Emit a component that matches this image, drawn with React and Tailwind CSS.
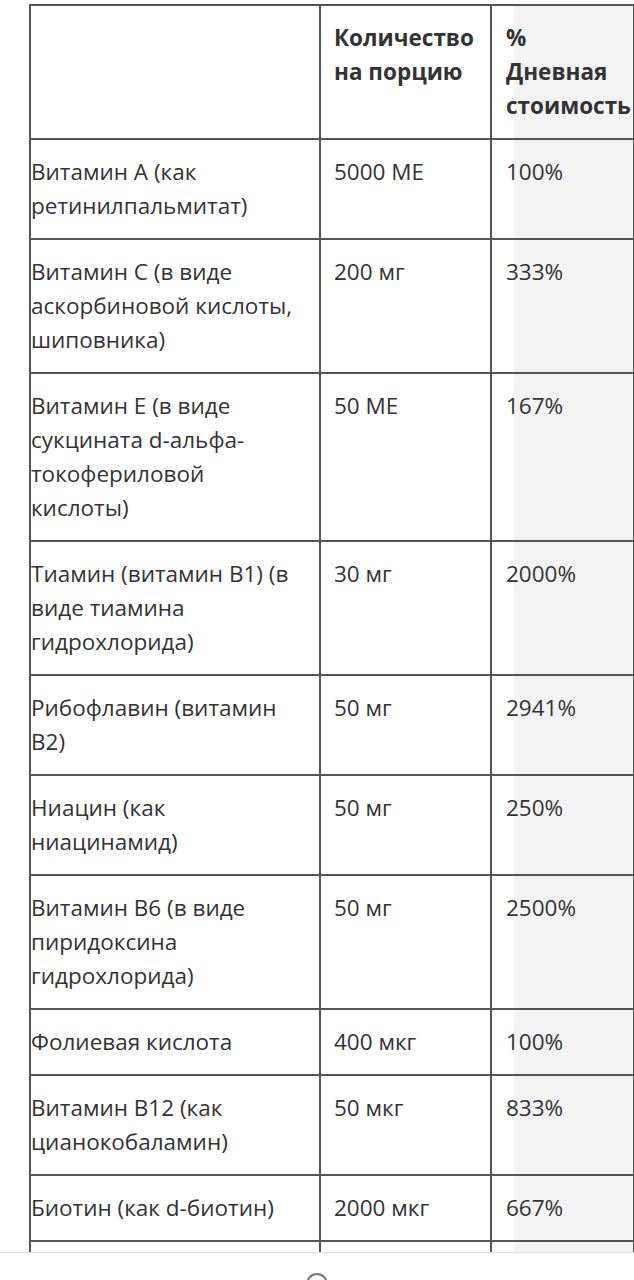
import React from "react";

const rows = [
  ["Витамин A (как ретинилпальмитат)", "5000 МЕ", "100%"],
  ["Витамин C (в виде аскорбиновой кислоты, шиповника)", "200 мг", "333%"],
  ["Витамин E (в виде сукцината d-альфа-токофериловой кислоты)", "50 МЕ", "167%"],
  ["Тиамин (витамин B1) (в виде тиамина гидрохлорида)", "30 мг", "2000%"],
  ["Рибофлавин (витамин B2)", "50 мг", "2941%"],
  ["Ниацин (как ниацинамид)", "50 мг", "250%"],
  ["Витамин B6 (в виде пиридоксина гидрохлорида)", "50 мг", "2500%"],
  ["Фолиевая кислота", "400 мкг", "100%"],
  ["Витамин B12 (как цианокобаламин)", "50 мкг", "833%"],
  ["Биотин (как d-биотин)", "2000 мкг", "667%"],
];

// общие стили ячеек
const cell = "border-2 border-[#555] align-top py-[15px]";
const shade = "bg-[linear-gradient(90deg,#ffffff_22px,#f3f3f3_22px)]";

export default function App() {
  return (
    <div className="relative h-screen overflow-hidden bg-white font-['Open_Sans',sans-serif] text-[22.5px] leading-[34px] text-[#333]">
      <table className="mt-[4px] ml-[29px] w-[604px] table-fixed border-collapse">
        <colgroup>
          <col className="w-[290px]" />
          <col className="w-[171px]" />
          <col className="w-[143px]" />
        </colgroup>
        <thead>
          <tr>
            <th className={`${cell} pl-0 pr-3`}></th>
            <th className={`${cell} px-[13px] text-left font-bold`}>Количество на порцию</th>
            <th className={`${cell} ${shade} px-[14px] text-left font-bold`}>
              %<br />Дневная стоимость
            </th>
          </tr>
        </thead>
        <tbody>
          {rows.map((r, i) => (
            <tr key={i}>
              <td className={`${cell} pl-0 pr-3`}>{r[0]}</td>
              <td className={`${cell} px-[13px]`}>{r[1]}</td>
              <td className={`${cell} ${shade} px-[14px]`}>{r[2]}</td>
            </tr>
          ))}
          {/* следующая строка уходит под нижнюю панель */}
          <tr className="h-[100px]">
            <td className={`${cell} pl-0 pr-3`}></td>
            <td className={`${cell} px-[13px]`}></td>
            <td className={`${cell} ${shade} px-[14px]`}></td>
          </tr>
        </tbody>
      </table>

      {/* нижняя панель */}
      <div className="absolute left-0 right-0 top-[1252px] bottom-0 border-t border-[#dcdcdc] bg-white">
        <div className="mx-auto mt-[20px] w-[22px] h-[22px] rounded-full border-2 border-[#777]"></div>
      </div>
    </div>
  );
}
